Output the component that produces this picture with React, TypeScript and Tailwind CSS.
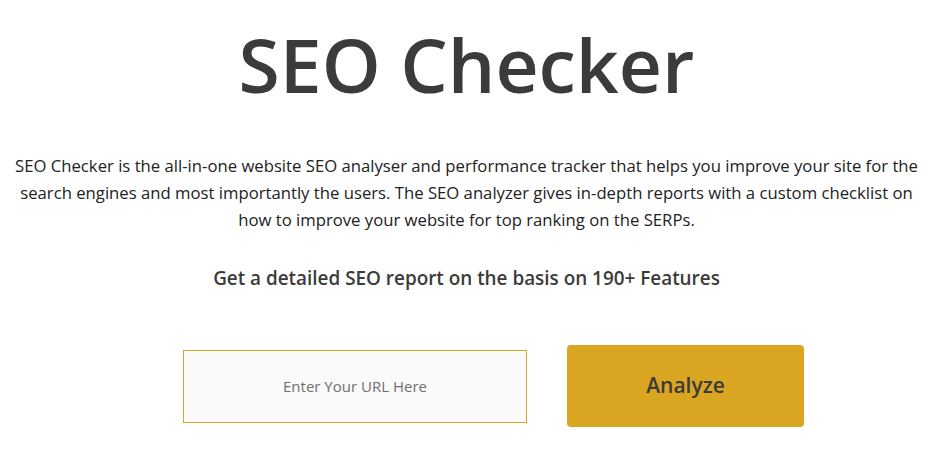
export default function App() {
    return (
        <div className="min-h-[452px] bg-white font-['Open_Sans',sans-serif] text-[#3b3b3b]">
            <div className="flex flex-col items-center pl-[6px] pr-[16px] pt-[14px]">
                <h1 className="text-[75px] leading-[100px] font-semibold text-[#3b3b3b]">SEO Checker</h1>

                <p className="mt-[38px] whitespace-nowrap text-center text-[16.7px] leading-[27px] text-[#222]">
                    SEO Checker is the all-in-one website SEO analyser and performance tracker that helps you improve your site for the
                    <br />
                    search engines and most importantly the users. The SEO analyzer gives in-depth reports with a custom checklist on
                    <br />
                    how to improve your website for top ranking on the SERPs.
                </p>

                <h3 className="mt-[32px] text-[18.9px] leading-[26px] font-semibold text-[#3b3b3b]">
                    Get a detailed SEO report on the basis on 190+ Features
                </h3>
            </div>

            {/* Search form */}
            <div className="mt-[54px] flex items-center pl-[183px]">
                <input
                    type="text"
                    placeholder="Enter Your URL Here"
                    className="h-[73px] w-[344px] border border-[#daa520] bg-[#fafafa] text-center text-[15px] text-[#555] placeholder:text-[#6f6f6f] outline-none"
                />
                <button className="ml-[40px] h-[82px] w-[237px] rounded-[4px] bg-[#daa520] text-[21px] font-semibold text-[#3b3b3b]">
                    Analyze
                </button>
            </div>
        </div>
    )
}
